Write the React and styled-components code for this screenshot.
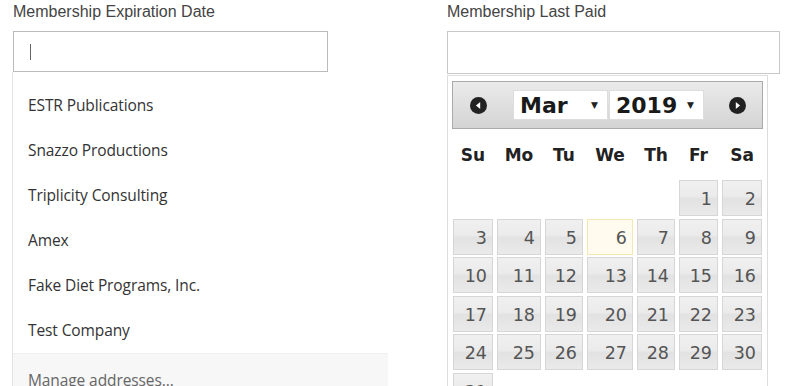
import React from 'react'
import styled, { createGlobalStyle } from 'styled-components'

const GlobalStyle = createGlobalStyle`
  html, body {
    margin: 0;
    padding: 0;
    background: #fff;
    overflow: hidden;
  }
`

const companies = [
  'ESTR Publications',
  'Snazzo Productions',
  'Triplicity Consulting',
  'Amex',
  'Fake Diet Programs, Inc.',
  'Test Company',
]

const dayNames = ['Su', 'Mo', 'Tu', 'We', 'Th', 'Fr', 'Sa']

// March 2019 starts on a Friday
const days = [
  null, null, null, null, null, 1, 2,
  ...Array.from({ length: 29 }, (_, i) => i + 3),
]

const Page = styled.div`
  display: grid;
  grid-template-columns: 434px 1fr;
  padding: 0 20px 0 13px;
  height: 386px;
  overflow: hidden;
`

const Field = styled.div`
  display: flex;
  flex-direction: column;
`

const Label = styled.div`
  font-family: "Liberation Sans", Arial, sans-serif;
  font-size: 16px;
  color: #444;
  height: 31px;
  line-height: 24px;
`

const Input = styled.div`
  box-sizing: border-box;
  width: ${p => p.$width}px;
  height: ${p => p.$height}px;
  border: 1px solid ${p => p.$border};
  background: #fff;
  display: flex;
  align-items: center;
  padding-left: 16px;
`

const Caret = styled.span`
  display: block;
  width: 1px;
  height: 16px;
  background: #666;
`

const Dropdown = styled.div`
  width: 375px;
  margin-left: -1px;
  border-left: 1px solid #e3e3e3;
  background: #fff;
`

const Item = styled.div`
  font-family: "Open Sans", "Noto Sans", sans-serif;
  font-size: 15.5px;
  color: #333;
  height: 45px;
  line-height: 45px;
  padding-left: 15px;
  letter-spacing: -0.1px;
  &:first-child {
    margin-top: 11px;
  }
`

const Manage = styled(Item)`
  background: #f7f7f7;
  border-top: 1px solid #f0f0f0;
  color: #666;
  margin-top: 0;
  line-height: 52px;
`

const Calendar = styled.div`
  box-sizing: border-box;
  width: 321px;
  margin-top: 1px;
  border: 1px solid #ddd;
  border-bottom: none;
  padding: 5px 4px 0 4px;
  font-family: "DejaVu Sans", Verdana, sans-serif;
  background: #fff;
`

const Header = styled.div`
  box-sizing: border-box;
  height: 48px;
  border: 1px solid #aaa;
  background: linear-gradient(#ebebeb, #d4d4d4);
  display: flex;
  align-items: center;
  padding: 0 16px 0 17px;
`

const NavIcon = styled.svg`
  width: 17px;
  height: 17px;
  flex: none;
`

const Selects = styled.div`
  display: flex;
  margin: 0 auto;
  padding-left: 1px;
`

const Select = styled.div`
  box-sizing: border-box;
  width: ${p => p.$width}px;
  height: 30px;
  background: #fff;
  border: 1px solid #ddd;
  display: flex;
  align-items: center;
  justify-content: space-between;
  padding: 0 9px 0 6px;
  font-weight: bold;
  font-size: 22px;
  color: #1a1a1a;
  & + & {
    margin-left: 1px;
  }
  span {
    font-size: 9px;
    font-weight: normal;
    color: #222;
  }
`

const DayNames = styled.div`
  display: grid;
  grid-template-columns: 40px 44px 38px 46px 38px 39px 40px;
  column-gap: 4px;
  padding: 0 0 0 1px;
  height: 51px;
  align-items: center;
  font-weight: bold;
  font-size: 17px;
  color: #222;
  text-align: center;
`

const Grid = styled.div`
  display: grid;
  grid-template-columns: 40px 44px 38px 46px 38px 39px 40px;
  grid-auto-rows: 36px;
  column-gap: 4px;
  row-gap: 2.6px;
  padding-left: 1px;
`

const Cell = styled.div`
  box-sizing: border-box;
  border: 1px solid ${p => (p.$today ? '#f3e7b3' : '#d6d6d6')};
  background: ${p =>
    p.$today
      ? '#fffbee'
      : 'linear-gradient(#f0f0f0 0%, #ebebeb 45%, #e2e2e2 52%, #eaeaea 100%)'};
  color: #555;
  font-size: 17.5px;
  text-align: right;
  padding-right: 5px;
  line-height: 36px;
  visibility: ${p => (p.$empty ? 'hidden' : 'visible')};
`

const Prev = () => (
  <NavIcon viewBox="0 0 16 16">
    <circle cx="8" cy="8" r="8" fill="#222" />
    <path d="M9.6 4.6 L5.6 8 L9.6 11.4 Z" fill="#fff" />
  </NavIcon>
)

const Next = () => (
  <NavIcon viewBox="0 0 16 16">
    <circle cx="8" cy="8" r="8" fill="#222" />
    <path d="M6.4 4.6 L10.4 8 L6.4 11.4 Z" fill="#fff" />
  </NavIcon>
)

export default function App() {
  return (
    <>
      <GlobalStyle />
      <Page>
        <Field>
          <Label>Membership Expiration Date</Label>
          <Input $width={315} $height={41} $border="#bbb">
            <Caret />
          </Input>
          <Dropdown>
            {companies.map(c => (
              <Item key={c}>{c}</Item>
            ))}
            <Manage>Manage addresses...</Manage>
          </Dropdown>
        </Field>
        <Field>
          <Label>Membership Last Paid</Label>
          <Input $width={333} $height={43} $border="#c8c8c8" />
          <Calendar>
            <Header>
              <Prev />
              <Selects>
                <Select $width={95}>
                  Mar<span>▼</span>
                </Select>
                <Select $width={95}>
                  2019<span>▼</span>
                </Select>
              </Selects>
              <Next />
            </Header>
            <DayNames>
              {dayNames.map(d => (
                <div key={d}>{d}</div>
              ))}
            </DayNames>
            <Grid>
              {days.map((d, i) => (
                <Cell key={i} $empty={d === null} $today={d === 6}>
                  {d}
                </Cell>
              ))}
            </Grid>
          </Calendar>
        </Field>
      </Page>
    </>
  )
}
